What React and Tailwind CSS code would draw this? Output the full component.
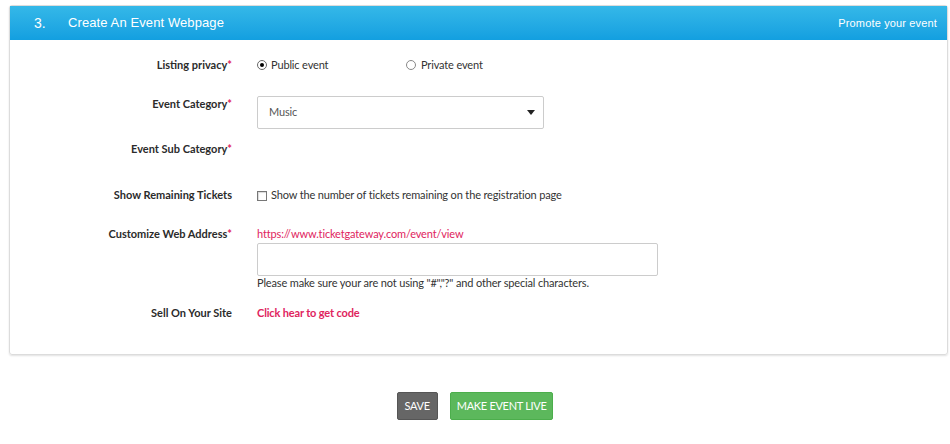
import React from 'react'

const Label = ({ children, required }) => (
  <div className="w-[222px] shrink-0 text-right font-bold text-[#2b2b2b] leading-[16px] tracking-normal">
    {children}
    {required && <span className="text-[#e0245e]">*</span>}
  </div>
)

const App = () => {
  return (
    <div className="w-[950px] h-[444px] bg-white font-['Lato',sans-serif] text-[11px] text-[#333]">
      <div className="pt-[5px] pl-[9px] pr-[2px]">
        <div className="border border-[#dcdcdc] rounded-[3px] shadow-[0_1px_2px_rgba(0,0,0,0.12)] h-[350px]">
          <div className="h-[34px] bg-gradient-to-b from-[#34b8e8] to-[#129fe0] flex items-center justify-between pl-[24px] pr-[10px] text-white font-['Liberation_Sans',sans-serif]">
            <div className="flex items-center">
              <span className="text-[14px] w-[34px]">3.</span>
              <span className="text-[13px] tracking-[0.1px]">Create An Event Webpage</span>
            </div>
            <span className="text-[11px] tracking-[0.15px]">Promote your event</span>
          </div>

          <div className="pt-[17px] tracking-[-0.15px]">
            <div className="flex items-center">
              <Label required>Listing privacy</Label>
              <div className="flex items-center pl-[25px] leading-[16px]">
                <span className="w-[10px] h-[10px] rounded-full border border-[#666] flex items-center justify-center mr-[4px]">
                  <span className="w-[4px] h-[4px] rounded-full bg-black" />
                </span>
                <span className="w-[135px]">Public event</span>
                <span className="w-[10px] h-[10px] rounded-full border border-[#888] mr-[5px]" />
                <span>Private event</span>
              </div>
            </div>

            <div className="flex mt-[23px]">
              <Label required>Event Category</Label>
              <div className="pl-[25px]">
                <div className="w-[287px] h-[33px] border border-[#ccc] rounded-[2px] flex items-center justify-between pl-[11px] pr-[8px] text-[#555]">
                  <span>Music</span>
                  <svg width="8" height="5" viewBox="0 0 8 5"><path d="M0 0h8L4 5z" fill="#222" /></svg>
                </div>
              </div>
            </div>

            <div className="flex mt-[12px]">
              <Label required>Event Sub Category</Label>
            </div>

            <div className="flex mt-[30px] items-center">
              <Label>Show Remaining Tickets</Label>
              <div className="pl-[25px] flex items-center leading-[16px]">
                <span className="w-[10px] h-[10px] border border-[#777] mr-[4px] mt-[2px] shadow-[inset_1px_1px_1px_rgba(0,0,0,0.15)]" />
                <span>Show the number of tickets remaining on the registration page</span>
              </div>
            </div>

            <div className="flex mt-[23px]">
              <Label required>Customize Web Address</Label>
              <div className="pl-[25px]">
                <div className="text-[#e0245e] leading-[16px]">https://www.ticketgateway.com/event/view</div>
                <div className="w-[401px] h-[33px] border border-[#ccc] rounded-[2px] mt-[1px]" />
                <div className="leading-[14px]">Please make sure your are not using "#","?" and other special characters.</div>
              </div>
            </div>

            <div className="flex mt-[15px]">
              <Label>Sell On Your Site</Label>
              <div className="pl-[25px] text-[#e0245e] font-bold leading-[16px]">Click hear to get code</div>
            </div>
          </div>
        </div>
      </div>

      <div className="flex justify-center gap-[12px] mt-[37px] tracking-[-0.3px]">
        <button className="h-[28px] px-[7px] bg-[#666] border border-[#555] rounded-[2px] text-white text-[11px]">SAVE</button>
        <button className="h-[28px] px-[6px] bg-[#5cb85c] border border-[#4cae4c] rounded-[2px] text-white text-[11px]">MAKE EVENT LIVE</button>
      </div>
    </div>
  )
}

export default App
